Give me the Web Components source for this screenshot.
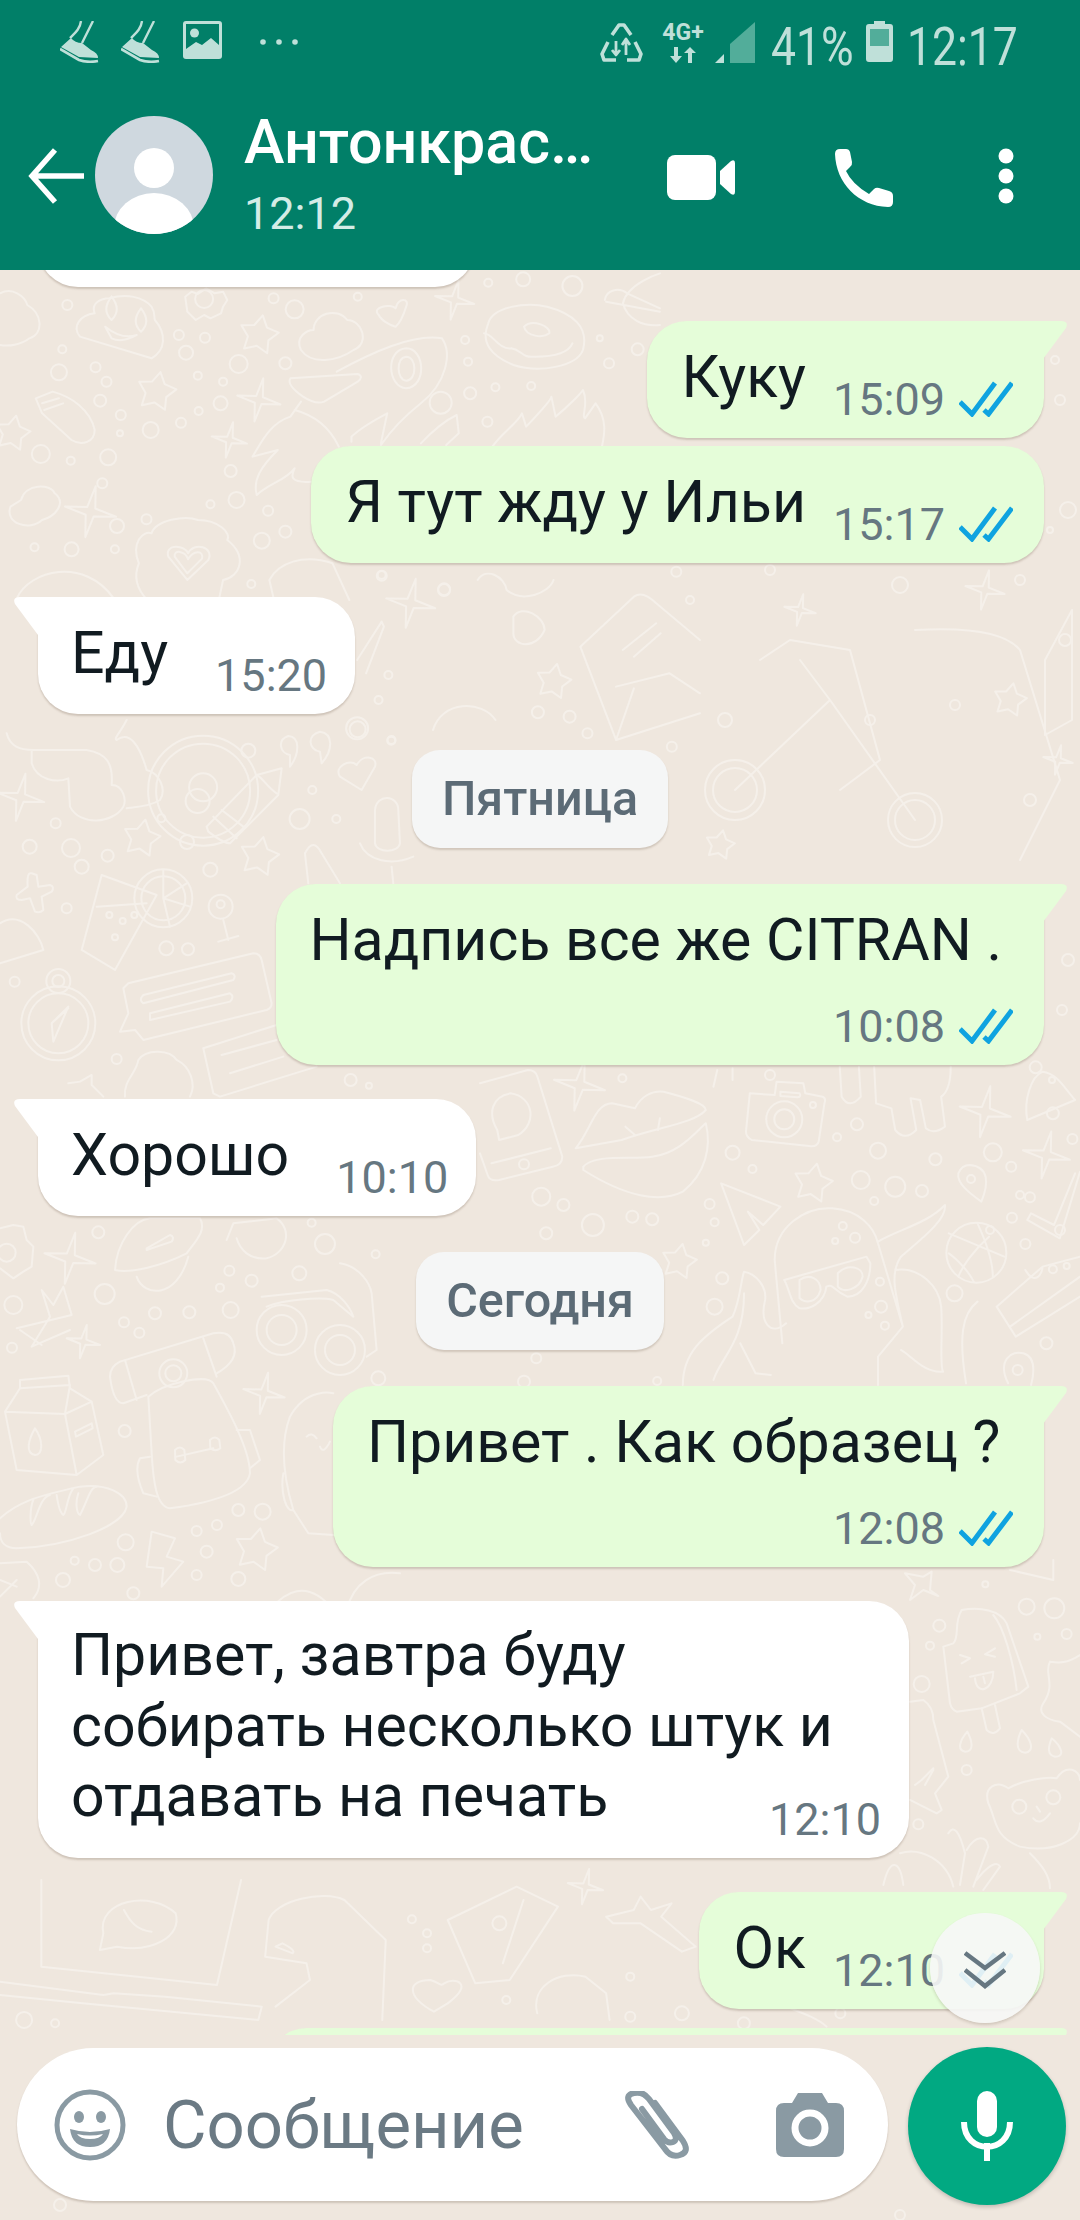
<!DOCTYPE html>
<html lang="ru">
<head>
<meta charset="utf-8">
<title>WhatsApp</title>
<style>
  html, body { margin: 0; padding: 0; background: #efe7de; }
  body { font-family: Roboto, "Noto Sans", sans-serif; }
</style>
</head>
<body>
<wa-app>
  <wa-header slot="header" name="Антонкрас…" seen="12:12"></wa-header>

  <wa-bubble side="in" style="margin-top:-100px;width:437px"></wa-bubble>
  <wa-bubble side="out" tail time="15:09" read>Куку</wa-bubble>
  <wa-bubble side="out" tight time="15:17" read>Я тут жду у Ильи</wa-bubble>
  <wa-bubble side="in" tail time="15:20">Еду</wa-bubble>
  <wa-day>Пятница</wa-day>
  <wa-bubble side="out" tail stacked time="10:08" read>Надпись все же CITRAN .</wa-bubble>
  <wa-bubble side="in" tail time="10:10">Хорошо</wa-bubble>
  <wa-day>Сегодня</wa-day>
  <wa-bubble side="out" tail stacked time="12:08" read style="width:711px">Привет . Как образец ?</wa-bubble>
  <wa-bubble side="in" tail over time="12:10" style="width:871px">Привет, завтра буду<br>собирать несколько штук и<br>отдавать на печать</wa-bubble>
  <wa-bubble side="out" tail time="12:10" read>Ок</wa-bubble>
  <wa-bubble side="out" tail style="margin-top:-15px;width:777px"></wa-bubble>

  <wa-composer slot="composer" placeholder="Сообщение"></wa-composer>
</wa-app>

<script>
// wallpaper: doodles traced per crop of the reference, x/y scaled back to the page
const doodles = [
  { t: [0, 270, 0.4209, 0.3333],
    rings: "160,105,5 700,118,9 650,85,5 425,195,5 487,203,5 442,248,7 148,238,4 140,307,8 227,292,5 253,335,5 238,392,6 287,435,5 285,490,3 358,480,8 430,458,5 470,317,4 530,335,4 524,400,7 472,423,4 567,282,9 678,280,6 1105,210,4 1112,275,4 1047,398,11 1117,370,6 1177,352,4 1262,348,4 1158,455,5 1425,205,3 1515,238,6 1447,280,5 1160,38,4 1243,28,7 1360,48,10 850,80,4 97,552,9 168,572,4 257,562,8 548,603,6 562,690,8 500,703,4 637,722,5 243,640,5 348,748,5 278,768,7 170,838,7 82,832,4 273,838,4 622,812,8 678,785,6 597,942,4 907,917,5 1055,960,6 485,87,9",
    stars: "615,195,20 372,365,20 30,490,18",
    sparks: "1080,90,20 615,390,22 545,510,18 215,725,26",
    paths: [
      "M190 200C170 170 190 135 225 130C215 100 240 85 260 85C300 70 340 80 360 110C370 130 365 140 368 150C395 190 395 240 360 265Z",
      "M265 80q-25 40 0 70q25-30 0-70M335 115q-25 40 0 70q25-30 0-70M250 170Q290 210 325 195Q290 220 265 205Z",
      "M715 240C700 200 730 180 745 180C745 130 800 110 825 150C860 150 880 220 840 240C800 275 740 285 715 240Z",
      "M900 135C880 110 930 100 940 115C945 80 975 85 965 110C960 130 950 160 940 170C925 165 905 150 900 135Z",
      "M800 305C880 250 980 190 1050 205C1075 250 1060 340 1000 400C960 440 930 480 905 525M835 515V500C860 470 890 450 920 430L905 520",
      "M690 325L850 312Q865 320 850 335L770 395Q750 405 720 380Q680 345 690 325Z",
      "M965 235C1010 235 1015 350 965 355C920 350 915 240 965 235ZM965 260C990 260 992 330 965 332C942 330 940 262 965 260Z",
      "M715 395L690 440C640 460 620 520 600 560L660 540C620 590 600 630 610 675C640 640 680 630 700 595C690 620 690 640 740 635M700 420C760 440 790 490 805 530",
      "M1170 530C1190 490 1230 460 1240 430L1250 470C1280 430 1310 390 1310 380L1320 440C1350 410 1380 370 1385 360C1400 400 1380 440 1390 445L1415 400C1445 450 1435 500 1430 530",
      "M85 385L125 365C170 380 215 420 225 480C225 515 195 530 170 510L100 430ZM100 400L140 385M105 420L150 400",
      "M1000 520C1030 480 1060 450 1085 435L1090 490L1060 525",
      "M330 880C310 820 340 780 360 790C370 750 440 735 470 750C520 750 550 790 540 810C590 860 570 920 530 930L520 990H350C320 950 320 910 330 880Z",
      "M400 860C390 820 440 825 447 850C460 815 510 830 495 870L445 930ZM415 860C412 838 440 842 447 868C460 838 485 842 480 866L445 910Z",
      "M0 70C30 50 60 80 65 105C100 130 105 190 70 205C50 225 20 230 0 225",
      "M50 690C60 640 120 640 130 670C160 700 130 740 100 750C70 785 10 760 25 710Z",
      "M440 80L455 65L470 72L490 55L510 70L530 65L540 90L530 110L525 130L500 145L485 135L465 150L445 125Z",
      "M1160 160C1170 110 1250 95 1300 110C1360 130 1400 170 1385 240C1370 290 1280 310 1220 285C1170 260 1140 220 1160 160Z",
      "M1150 190C1170 190 1185 240 1215 235C1240 240 1240 265 1270 260C1310 260 1350 250 1360 220M1245 170C1265 145 1310 170 1305 190C1290 205 1250 200 1245 170Z",
      "M1480 100C1490 40 1568 10 1568 10M1480 100C1490 150 1530 170 1568 165M1437 90C1440 60 1470 50 1490 70L1568 115M1440 95L1568 125",
      "M650 985L640 930C660 880 720 850 790 880L830 990M40 985C70 900 200 860 270 985"
    ] },
  { t: [0, 720, 0.3333, 0.3333],
    rings: "167,310,5 484,295,4 593,243,12 899,297,10 1009,297,4 937,210,4 745,92,7 1174,62,4 1073,28,8 89,380,7 213,384,9 323,407,6 245,440,7 561,366,7 631,449,7 200,565,5 499,685,7 564,688,6 44,785,5 350,1017,5 1052,1080,6 1107,1097,3 490,535,29 490,535,22 328,585,3 368,603,3 403,585,3 345,652,3 662,560,12 662,553,4 175,910,37 175,910,30 175,783,12 175,783,6",
    stars: "425,355,19 778,410,20",
    sparks: "62,232,24",
    paths: [
      "M20 40C30 80 60 90 100 90L260 90C320 100 340 130 335 195C370 195 380 240 370 260C340 310 240 320 210 260L205 175C170 190 110 180 95 130V90",
      "M380 0C360 40 340 55 350 60C390 30 420 80 440 150C480 160 500 210 480 240C450 260 400 262 380 265",
      "M95 460q-15-5-12 40L50 525q-5 15 15 15L90 535L105 575q15 5 25-5L125 530L155 515q10-15-5-20L115 500L110 465Z",
      "M870 140C900 100 900 50 865 48C830 60 840 100 870 105ZM965 130C1000 90 1000 40 960 35C920 45 925 90 960 95Z",
      "M1085 210L1020 170C1000 140 1050 115 1070 135C1090 100 1135 110 1125 140Z",
      "M620 320L770 165L845 145L835 225L690 370Q670 370 625 335ZM640 290L710 355M665 270L730 320M770 165C790 175 800 200 830 220",
      "M1125 270C1130 220 1195 225 1195 270L1200 370C1195 400 1130 400 1125 370ZM1080 370C1100 420 1170 440 1240 410M1175 440L1180 490",
      "M915 400Q940 350 965 400L1020 490M925 490L915 400",
      "M305 465L470 525L345 750L245 690ZM290 560L440 550M490 535L490 450M490 535L560 490M490 535L570 560M490 535L510 620",
      "M670 600L685 660M655 665L715 648M0 610C60 570 120 640 130 690L0 730",
      "M205 860L160 965L155 910ZM160 905L205 865",
      "M385 790L760 700Q780 700 785 720L815 850Q815 865 800 870L430 960L405 930L360 935L385 880L370 805Z",
      "M430 825L695 760Q710 765 700 780L430 850Q415 840 430 825ZM450 880L690 820Q705 830 690 845L450 900Z",
      "M610 985L830 915M610 985L640 1120L660 1130L950 1040M665 1005L830 960M690 1060L850 1010",
      "M375 1130C370 1080 410 1060 415 1020C440 985 510 990 530 1020C570 1040 590 1090 570 1130M205 1090L240 1085L275 1065L275 1095L310 1130"
    ] },
  { t: [0, 560, 0.4464, 0.3333],
    rings: "455,692,55 455,692,47 455,682,14 1205,457,6 1276,470,6 1316,520,5 1515,35,5 870,345,4 848,420,4 800,505,11 877,540,4 995,88,6 855,45,4 1505,560,5",
    stars: "1240,365,18",
    sparks: "920,130,25",
    paths: [
      "M970 510C990 420 1080 420 1110 480",
      "M1380 540L1300 260L1420 110Q1440 90 1470 130L1568 240M1380 380L1500 340L1568 400M1380 540L1420 385M1380 540L1568 460M1395 270L1470 190M1420 290L1480 220",
      "M800 300L855 185L860 200L820 340",
      "M1070 60C1090 20 1130 50 1135 90C1170 130 1230 100 1240 60M1150 170C1170 130 1220 170 1220 210C1200 270 1150 260 1150 220Z"
    ] },
  { t: [480, 1060, 0.3827, 0.3333],
    rings: "115,313,5 795,178,18 795,178,10 870,135,3 372,55,4 660,278,7 712,327,4 160,410,9 218,435,6 295,495,11 398,470,6 450,478,6 173,520,6 600,432,5 613,487,4 590,548,3 633,655,6 613,740,8 933,232,4 985,193,6 1040,272,8 1190,298,6 1340,277,9 1388,320,5 1548,237,5 995,360,9 1085,380,10 1155,393,6 1030,423,4 1437,412,5 1390,473,5 1425,552,5 1240,700,8 1480,850,6 1045,665,4 1048,740,6 1015,765,3 1058,797,4 948,498,4 980,533,5 928,543,3 147,895,5 115,965,6 463,963,4 1283,357,4 1297,578,30 1497,628,4 1533,618,3 1452,22,6 1497,160,6 1405,930,5",
    stars: "870,370,20 520,605,18",
    sparks: "260,75,26 1320,155,26 1480,285,24",
    paths: [
      "M0 70L125 30Q145 30 150 50L215 290Q215 315 190 320L50 360Q25 365 20 345L0 280M30 310L185 265M80 100C140 110 150 190 100 225L50 240L45 210C20 160 30 110 80 100Z",
      "M250 265C290 210 300 130 345 130L405 145C420 110 450 90 480 95C530 110 590 130 590 150C560 190 470 200 370 240Z",
      "M270 320C300 280 400 300 450 290C520 280 560 220 590 190C605 260 590 340 530 395C470 430 380 410 270 330ZM380 200L405 225M470 175L465 210",
      "M705 100L770 105L775 65L845 70L850 100L895 110Q905 115 900 130L885 245Q880 262 860 258L710 240Q695 230 695 215ZM785 95L835 100Q840 110 830 112L785 108Z",
      "M620 30L610 80M660 25V60",
      "M630 370L785 440L740 495L700 455L730 510L690 555Z",
      "M1280 315C1330 320 1330 370 1310 425C1280 400 1245 370 1250 340C1255 325 1265 315 1280 315Z",
      "M1430 480L1515 535L1568 335M1430 480L1440 460L1500 495L1555 340",
      "M1225 520L1370 590M1300 490C1320 540 1340 600 1340 650M1330 530C1290 570 1260 620 1250 650M1225 580C1250 600 1280 640 1290 665",
      "M790 850L770 600C770 500 850 440 920 445C990 450 1030 500 1040 550L1105 800L1040 890V975M1040 545C1090 510 1170 490 1215 435C1220 480 1150 540 1100 590C1070 640 1085 700 1105 800M1085 630C1150 620 1200 680 1205 740C1210 810 1200 920 1210 935C1160 940 1130 890 1100 870",
      "M795 660L1010 590L1020 610C1020 660 1000 710 960 710C920 690 925 670 905 680C900 730 860 750 835 745C810 730 810 690 795 660ZM835 660C860 640 890 655 890 690C880 730 850 730 835 715ZM935 640C960 610 1000 620 1000 650C990 690 950 700 935 680Z",
      "M530 975C530 880 580 830 660 770C680 720 680 670 690 635C720 640 750 680 745 720C730 790 760 830 800 790M610 960C630 890 690 850 690 700M680 850L720 940L760 945",
      "M1350 740L1470 620L1568 590M1350 740L1400 830L1568 710M1385 800L1568 650M1425 630C1450 680 1470 640 1470 620",
      "M1430 180C1420 120 1440 50 1470 35C1510 40 1530 90 1555 120Z",
      "M940 20L945 110Q965 150 995 110L990 20M1030 20L1035 130L1075 145L1085 210Q1110 245 1140 210L1125 115L1150 120L1165 205Q1185 225 1215 200L1205 110Q1230 90 1230 20",
      "M1300 725C1260 760 1250 830 1270 970M1380 970C1350 900 1390 870 1420 880C1450 890 1450 930 1440 975"
    ] },
  { t: [0, 1210, 0.3333, 0.3333],
    rings: "20,128,9 295,67,6 314,252,10 40,285,9 465,310,6 568,307,6 692,300,8 372,337,5 418,368,5 36,413,5 688,182,5 755,212,6 660,233,4 898,190,7 975,102,10 1127,133,4 935,38,4 1135,505,7 374,663,6 715,900,6 788,905,8 590,963,5 651,945,5 620,1025,6 377,997,8 224,1052,4 285,1065,6 352,1065,7 189,1110,7 590,1095,5 715,1107,7 400,1150,6 845,360,25 845,360,15 1020,420,25 1020,420,15 520,490,14 520,490,8",
    stars: "768,1020,22",
    sparks: "210,145,26 250,395,17 792,550,21",
    paths: [
      "M0 55L40 45L70 50L80 90L100 110L95 170L70 185L40 205L0 175",
      "M345 180C350 100 400 30 450 25L600 25C620 60 590 90 560 130C480 170 390 190 345 180ZM440 115L510 75Q525 80 515 95L440 120ZM410 200C430 260 530 270 565 140M680 90L700 40L830 25C880 60 860 130 800 145C750 150 720 120 710 85",
      "M50 355L215 315L190 230L160 285L125 240L150 320L95 410L210 360M60 360L125 405",
      "M785 260L980 240C1020 250 1050 290 1060 320M1020 160C1080 170 1110 220 1115 250L1130 420L1100 440M800 290C850 270 960 260 1000 270L1060 320",
      "M445 560C490 520 620 490 640 520C690 610 750 720 750 790C740 850 620 880 510 895C470 890 460 820 455 730Z",
      "M330 500Q330 470 360 455L640 370Q690 360 700 400Q720 450 650 490M440 555L370 580Q340 580 330 500M375 450L410 570M610 385L650 500",
      "M530 740L640 715M525 720q15-15 28 0l3 30q-15 15-30 0ZM630 690q15-15 28 0l3 25q-15 12-30 0ZM450 740L420 745Q400 780 430 850L470 860M710 660H750L780 750L750 775",
      "M60 510L205 497L210 535L275 575L310 735L230 795L50 780L15 605L60 535ZM60 535L210 525M15 605L195 612L275 575M195 612L230 795M195 612L210 525",
      "M105 655C130 690 130 735 105 735C75 730 85 690 105 655ZM225 665L275 640L278 655L228 680Z",
      "M0 925C50 880 100 860 240 830C320 820 380 850 380 890C370 950 200 1010 50 1015C20 1015 0 1000 0 970M100 870C90 890 90 940 95 945C110 930 120 860 150 855M170 855C175 890 180 910 190 915C200 910 200 860 220 835M235 850C225 880 230 910 240 915C260 880 270 830 290 830",
      "M455 965L525 985L500 1040L550 1055L485 1130L490 1075L440 1070Z",
      "M880 900C850 800 840 700 870 620C920 530 1000 550 1000 550M920 680q15-15 30 5M960 710q10 25 30-15M850 790C840 850 860 910 880 900L925 970L1000 975",
      "M0 1060L80 1055C120 1090 130 1130 100 1165M0 1110L50 1130M0 1160L50 1110M810 1200C850 1150 920 1100 1000 1200M1040 1200C1060 1120 1120 1080 1200 1090"
    ] },
  { t: [880, 1560, 0.3333, 0.3333],
    rings: "178,197,6 150,257,4 440,140,8 523,145,10 472,230,3 560,222,5 125,372,8 260,630,5 115,793,5 316,73,3 418,740,7 520,712,7",
    paths: [
      "M190 260L220 250C240 230 220 190 245 150C300 140 360 150 380 190L445 380L420 400L305 445L230 455Q215 450 210 430ZM340 165C370 200 400 300 410 390M305 445L320 510Q340 530 360 505L345 435",
      "M240 285L270 295L245 310M345 265L315 283L345 290M270 350L340 335C340 390 290 410 285 355M310 350L315 370",
      "M75 40L130 50L155 35L150 90L175 108L130 90L90 120L105 75Z",
      "M262 515C280 550 280 575 255 575C230 570 240 540 262 515ZM425 510C455 540 465 575 435 578C405 575 410 540 425 510ZM515 535C540 555 560 590 525 590C500 585 505 560 515 535Z",
      "M510 305C540 310 560 310 600 285M510 305C490 340 530 370 490 430C470 460 500 480 540 485L600 530",
      "M385 685C350 660 310 680 325 730C350 780 340 830 420 860C520 880 600 840 600 790M385 685C430 660 500 650 530 655C560 610 600 630 600 660M460 775Q480 800 510 760M480 755L470 740M520 770",
      "M60 880C120 860 200 900 220 980M205 820Q230 780 255 880L240 975M260 870C290 820 320 830 325 860L280 980M290 960C320 920 350 900 360 920L310 990M10 975C30 890 60 900 70 975M450 880C490 920 510 950 510 985",
      "M90 425L130 420Q160 440 160 480L205 650L165 700L185 750L170 760L90 720M105 675L125 660L160 625M135 675L160 630M390 30L520 60V0"
    ] },
  { t: [0, 1880, 0.6888, 0.3333],
    rings: "725,130,7 598,118,4 620,160,4 620,205,4 35,420,8 80,430,4 915,290,4 990,400,7 915,410,5 735,360,4 1080,430,6 1220,400,5",
    sparks: "850,20,18",
    paths: [
      "M60 0V260L315 315L350 0M0 305L150 345L165 340L240 350L380 380L375 420L120 370L0 345",
      "M145 210L150 160C140 60 220 30 255 100C265 170 220 220 170 200ZM180 90C190 130 200 150 220 155",
      "M390 120C400 60 470 30 500 60L560 180L555 420M390 120L385 230L445 250L450 300L400 380M410 190Q430 210 425 220L400 200Z",
      "M630 395C590 350 590 300 625 300C640 310 640 320 645 310C660 290 690 310 650 370Z",
      "M880 110L920 90L930 50L945 90L975 70L960 110L1010 200L990 215L930 130L890 130Z",
      "M650 120L750 20L810 80L740 300L690 310ZM760 60L730 250",
      "M780 400C770 320 810 270 850 290L880 340L885 420M1100 340C1130 380 1180 400 1200 440"
    ] },
  { t: [0, 0, 1, 1],
    rings: "1055,360,4 1060,400,5 1068,510,8 1050,530,3 1062,1010,5 1068,960,6 1052,1080,3 725,720,7 870,720,5 955,705,5 1030,800,6 690,600,4 770,570,5 900,585,8 1020,580,5 735,790,30 735,790,22 915,820,27 915,820,20 1065,640,6 770,1075,5 1020,1195,4 1060,1230,5 990,1230,4 60,2205,6 900,2215,5",
    stars: "1010,700,17 720,845,15",
    sparks: "985,590,20 800,610,16 1058,760,15",
    paths: [
      "M760 660L790 640L850 650L880 760L840 790M735 790L830 700L915 820M830 700L800 660",
      "M915 630Q1000 625 1020 650L1060 780L1020 860",
      "M1045 660L1072 610V720L1045 735Z"
    ] }
];

function ringMark(cx, cy, r) {
  return `<circle cx="${cx}" cy="${cy}" r="${r}"/>`;
}

function pointedMark(cx, cy, r, tips, inner) {
  let pts = [];
  for (let i = 0; i < tips * 2; i++) {
    const a = -Math.PI / 2 + 0.2 + i * Math.PI / tips;
    const rad = i % 2 === 0 ? r : r * inner;
    pts.push((cx + rad * Math.cos(a)).toFixed(1) + "," + (cy + rad * Math.sin(a)).toFixed(1));
  }
  return `<polygon points="${pts.join(" ")}"/>`;
}

class WaWallpaper extends HTMLElement {
  constructor() {
    super();
    this.attachShadow({mode: "open"});
  }

  connectedCallback() {
    let body = "";
    for (const zone of doodles) {
      const [ox, oy, sx, sy] = zone.t;
      const each = (list, fn) => {
        if (!list) return;
        for (const item of list.split(" ")) {
          const [x, y, r] = item.split(",").map(Number);
          body += fn(ox + x * sx, oy + y * sy, r);
        }
      };
      each(zone.rings, ringMark);
      each(zone.stars, (x, y, r) => pointedMark(x, y, r, 5, 0.55));
      each(zone.sparks, (x, y, r) => pointedMark(x, y, r, 4, 0.22));
      body += `<g transform="translate(${ox} ${oy}) scale(${sx} ${sy})">`;
      for (const d of zone.paths) {
        body += `<path d="${d}" vector-effect="non-scaling-stroke"/>`;
      }
      body += "</g>";
    }
    this.shadowRoot.innerHTML = `
    <style>
      :host { display: block; position: absolute; inset: 0; }
      svg { display: block; width: 1080px; height: 2220px; }
      svg * { fill: none; stroke: #f5f0ea; stroke-width: 2; stroke-linejoin: round; stroke-linecap: round; }
    </style>
    <svg viewBox="0 0 1080 2220">${body}</svg>`;
  }
}

class WaApp extends HTMLElement {
  constructor() {
    super();
    this.attachShadow({mode: "open"});
    this.shadowRoot.innerHTML = `
    <style>
      :host {
        display: flex;
        flex-direction: column;
        position: relative;
        width: 1080px;
        height: 2220px;
        overflow: hidden;
        background: #efe7de;
      }
      .chat {
        position: relative;
        flex: none;
        height: 1765px;
        overflow: hidden;
        display: flex;
        flex-direction: column;
        gap: 34px;
      }
      .composer { position: relative; flex: 1; }
      wa-scroll-down { position: absolute; left: 930px; top: 1913px; }
    </style>
    <wa-wallpaper></wa-wallpaper>
    <slot name="header"></slot>
    <div class="chat"><slot></slot></div>
    <div class="composer"><slot name="composer"></slot></div>
    <wa-scroll-down></wa-scroll-down>`;
  }
}

class WaHeader extends HTMLElement {
  constructor() {
    super();
    this.attachShadow({mode: "open"});
    this.name = this.getAttribute("name");
    this.seen = this.getAttribute("seen");
  }

  shoe() {
    return `<svg width="40" height="42" viewBox="0 0 40 42">
      <path d="M21 0C20 8 15 12 10 17M33 0L22 22" fill="none" stroke="#bfe0d9" stroke-width="2.400"/>
      <path d="M1 26L11 17Q15 22 22 22L31 29Q38 32 38 37L19 36Z" fill="#bfe0d9"/>
      <path d="M0 28L19 39Q28 42 38 40" fill="none" stroke="#bfe0d9" stroke-width="2.600"/>
    </svg>`;
  }

  connectedCallback() {
    this.shadowRoot.innerHTML = `
    <style>
      :host {
        display: block;
        position: relative;
        height: 270px;
        background: #017f68;
        color: #fff;
        font-family: Roboto, sans-serif;
      }
      .status {
        height: 76px;
        display: flex;
        align-items: flex-start;
        padding: 21px 0 0 60px;
        box-sizing: border-box;
        color: #bfe0d9;
      }
      .status svg { display: block; flex: none; }
      .shoes { display: flex; gap: 21px; }
      .pic { margin-left: 22px; }
      .more { margin-left: 38px; margin-top: 18px; }
      .right { margin-left: 302px; display: flex; align-items: flex-start; }
      .net { width: 42px; margin-left: 19px; margin-top: 2px; display: flex; flex-direction: column; align-items: center; }
      .net b { font: 700 23px/19px Roboto, sans-serif; letter-spacing: 0; }
      .stat-text { font-size: 53px; line-height: 46px; display: block; transform: scaleX(0.84); transform-origin: left top; white-space: nowrap; }
      .toolbar {
        height: 194px;
        display: flex;
        align-items: flex-start;
      }
      .back { margin: 72px 0 0 28px; }
      .avatar { margin: 40px 0 0 11px; }
      .who { margin-left: 31px; width: 380px; padding-top: 31px; }
      .name { font-size: 61px; font-weight: 500; line-height: 70px; white-space: nowrap; }
      .seen { font-size: 45px; line-height: 50px; color: #d4ece6; margin-top: 12px; }
      .video { margin: 79px 0 0 43px; }
      .call { margin: 72px 0 0 98px; }
      .dots { margin: 72px 0 0 104px; }
    </style>
    <div class="status">
      <div class="shoes">${this.shoe()}${this.shoe()}</div>
      <svg class="pic" width="39" height="38" viewBox="0 0 39 38">
        <rect width="39" height="38" rx="3" fill="#bfe0d9"/>
        <rect x="3" y="3" width="33" height="32" fill="#017f68"/>
        <circle cx="11.500" cy="12" r="4.500" fill="#bfe0d9"/>
        <path d="M3 28L13 21L19 24L28 17L36 24V35H3Z" fill="#bfe0d9"/>
      </svg>
      <svg class="more" width="38" height="6" viewBox="0 0 38 6" fill="#bfe0d9">
        <circle cx="3" cy="3" r="2.800"/><circle cx="19" cy="3" r="2.800"/><circle cx="35" cy="3" r="2.800"/>
      </svg>
      <div class="right">
        <svg width="43" height="40" viewBox="0 0 43 40" style="margin-top:2px" fill="none" stroke="#bfe0d9" stroke-width="3.600" stroke-linejoin="round">
          <path d="M12 12L19 2H24L31 12M8 19L2 31L4 37H16M27 37H39L41 31L35 19"/>
          <path d="M16 18V31M12 27L16 32L20 27M26 32V17M22 22L26 16L30 22" stroke-width="2.800"/>
        </svg>
        <div class="net">
          <b>4G+</b>
          <svg width="26" height="16" viewBox="0 0 26 16" fill="#bfe0d9" style="margin-top:5px">
            <path d="M4 0H8V9H12L6 16L0 9H4ZM18 16H22V6H26L20 0L14 6H18Z"/>
          </svg>
        </div>
        <svg width="40" height="41" viewBox="0 0 40 41" style="margin:1px 0 0 11px">
          <path d="M15 41V22L40 0V41Z" fill="#52ad9a"/>
          <path d="M0 41L9 32V41Z" fill="#bfe0d9"/>
        </svg>
        <span style="width:79px;margin:3px 0 0 16px"><span class="stat-text">41%</span></span>
        <svg width="27" height="41" viewBox="0 0 27 41" style="margin-left:16px">
          <path d="M8 0H19V3H24Q27 3 27 6V38Q27 41 24 41H3Q0 41 0 38V6Q0 3 3 3H8Z" fill="#bfe0d9"/>
          <rect x="4" y="8" width="19" height="17" fill="#52ad9a"/>
        </svg>
        <span style="width:108px;margin:3px 0 0 14px"><span class="stat-text">12:17</span></span>
      </div>
    </div>
    <div class="toolbar">
      <svg class="back" width="56" height="56" viewBox="0 0 56 56" fill="none" stroke="#fff" stroke-width="5.500">
        <path d="M56 28H4M27 2L4 28L27 54"/>
      </svg>
      <svg class="avatar" width="118" height="118" viewBox="0 0 118 118">
        <clipPath id="round"><circle cx="59" cy="59" r="59"/></clipPath>
        <circle cx="59" cy="59" r="59" fill="#cfd8df"/>
        <g clip-path="url(#round)">
          <ellipse cx="59" cy="52" rx="20" ry="20" fill="#fff"/>
          <ellipse cx="59" cy="112" rx="40" ry="35" fill="#fff"/>
        </g>
      </svg>
      <div class="who">
        <div class="name">${this.name}</div>
        <div class="seen">${this.seen}</div>
      </div>
      <svg class="video" width="68" height="45" viewBox="0 0 68 45" fill="#fff">
        <rect width="49" height="45" rx="8"/>
        <path d="M53 16L64 6Q68 4 68 8V37Q68 41 64 39L53 29Z"/>
      </svg>
      <svg class="call" width="60" height="60" viewBox="0 0 60 60" fill="#fff">
        <path d="M2 6Q2 1 7 1L13 1Q16 1 17 4L19 14Q19.500 17 17 19L13 23Q19 36 36 46L41 41Q43 39 46 40L56 43Q60 44 60 48V54Q60 59 55 59C25 58 3 35 2 6Z"/>
      </svg>
      <svg class="dots" width="18" height="56" viewBox="0 0 18 56" fill="#fff">
        <circle cx="9" cy="8" r="7.500"/><circle cx="9" cy="28" r="7.500"/><circle cx="9" cy="48" r="7.500"/>
      </svg>
    </div>`;
  }
}

class WaBubble extends HTMLElement {
  constructor() {
    super();
    this.attachShadow({mode: "open"});
    this.time = this.getAttribute("time");
    this.read = this.hasAttribute("read");
  }

  style() {
    return `
    <style>
      :host { display: block; position: relative; flex: none; font-family: Roboto, sans-serif; }
      :host([side="out"]) { align-self: flex-end; margin-right: 36px; --bg: #e5fdd9; }
      :host([side="in"]) { align-self: flex-start; margin-left: 38px; --bg: #fff; }
      :host([tight]) { margin-top: -26px; }
      .b {
        display: flex;
        align-items: flex-end;
        min-height: 117px;
        box-sizing: border-box;
        padding: 20px 0 13px 34px;
        background: var(--bg);
        border-radius: 40px;
        box-shadow: 0 2px 2px rgba(90, 70, 50, .22);
        color: #111b21;
      }
      :host([side="in"]) .b { padding-left: 33px; }
      :host([tail][side="out"]) .b { border-top-right-radius: 0; }
      :host([tail][side="in"]) .b { border-top-left-radius: 0; }
      .text { font-size: 59px; line-height: 71px; white-space: nowrap; padding-bottom: 13px; }
      .meta { display: flex; align-items: flex-start; flex: none; margin-left: 27px; padding-right: 31px; height: 50px; }
      :host([side="in"]) .meta { margin-left: 47px; padding-right: 28px; }
      .time { font-size: 45px; line-height: 50px; color: #667781; white-space: nowrap; }
      .meta svg { margin: 6px 0 0 14px; }
      :host([stacked]) .b { flex-direction: column; align-items: stretch; }
      :host([stacked]) .text { padding: 0 42px 0 0; margin-bottom: 27px; }
      :host([stacked]) .meta { justify-content: flex-end; }
      :host([over]) .b { display: grid; padding-top: 19px; }
      :host([over]) .text { line-height: 70.500px; }
      :host([over]) .text, :host([over]) .meta { grid-area: 1 / 1; }
      :host([over]) .meta { justify-self: end; align-self: end; }
      .tail { position: absolute; top: 0; display: block; }
      :host([side="out"]) .tail { right: -24px; }
      :host([side="in"]) .tail { left: -25px; transform: scaleX(-1); }
    </style>`;
  }

  connectedCallback() {
    const check = `<svg width="54" height="36" viewBox="0 0 54 36" fill="none" stroke="#0fa3e0" stroke-width="5">
      <path d="M1 21L13 33L36 2M25 29L29.500 33L53 2"/></svg>`;
    const meta = this.time
      ? `<div class="meta"><span class="time">${this.time}</span>${this.read ? check : ""}</div>`
      : "";
    this.shadowRoot.innerHTML = `${this.style()}
    <div class="b"><div class="text"><slot></slot></div>${meta}</div>
    ${this.hasAttribute("tail") ? `<svg class="tail" width="25" height="38" viewBox="0 0 25 38">
      <path d="M0 0H18Q26 0 23 7L0 38Z" style="fill:var(--bg)"/></svg>` : ""}`;
  }
}

class WaDay extends HTMLElement {
  constructor() {
    super();
    this.attachShadow({mode: "open"});
    this.shadowRoot.innerHTML = `
    <style>
      :host {
        display: block;
        flex: none;
        align-self: center;
        margin: 2px 0;
        padding: 0 30px;
        height: 98px;
        background: #f5f6f6;
        border-radius: 28px;
        box-shadow: 0 2px 2px rgba(90, 70, 50, .2);
        color: #5c6b76;
        font: 500 48.500px/98px Roboto, sans-serif;
      }
    </style>
    <slot></slot>`;
  }
}

class WaScrollDown extends HTMLElement {
  constructor() {
    super();
    this.attachShadow({mode: "open"});
    this.shadowRoot.innerHTML = `
    <style>
      :host {
        display: flex;
        align-items: center;
        justify-content: center;
        width: 110px;
        height: 110px;
        border-radius: 50%;
        background: rgba(246, 247, 246, .9);
        box-shadow: 0 2px 3px rgba(90, 70, 50, .2);
      }
      svg { margin-top: 4px; }
    </style>
    <svg width="42" height="38" viewBox="0 0 42 38" fill="none" stroke="#667781" stroke-width="4.500">
      <path d="M1 2L21 17L41 2M1 19L21 35L41 19"/>
    </svg>`;
  }
}

class WaComposer extends HTMLElement {
  constructor() {
    super();
    this.attachShadow({mode: "open"});
    this.placeholder = this.getAttribute("placeholder");
  }

  connectedCallback() {
    this.shadowRoot.innerHTML = `
    <style>
      :host {
        display: flex;
        gap: 20px;
        padding: 13px 14px 0 17px;
        font-family: Roboto, sans-serif;
      }
      .field {
        flex: 1;
        height: 153px;
        display: flex;
        align-items: center;
        background: #fff;
        border-radius: 77px;
        box-shadow: 0 2px 2px rgba(90, 70, 50, .22);
        padding-left: 37px;
      }
      .hint { font-size: 67px; color: #6b7a84; margin-left: 37px; width: 460px; white-space: nowrap; }
      .mic {
        flex: none;
        width: 158px;
        height: 158px;
        margin-top: -1px;
        border-radius: 50%;
        background: #01a982;
        box-shadow: 0 2px 4px rgba(0, 0, 0, .2);
        display: flex;
        align-items: center;
        justify-content: center;
      }
      svg { display: block; flex: none; }
    </style>
    <div class="field">
      <svg width="72" height="72" viewBox="0 0 72 72">
        <circle cx="36" cy="36" r="33" fill="none" stroke="#8a9aa3" stroke-width="5"/>
        <ellipse cx="25" cy="28" rx="5" ry="6" fill="#8a9aa3"/>
        <ellipse cx="47" cy="28" rx="5" ry="6" fill="#8a9aa3"/>
        <path d="M16 40Q36 46 56 40Q54 58 36 58Q18 58 16 40Z" fill="#8a9aa3"/>
        <path d="M23 45Q36 48 49 45Q46 50 36 50Q26 50 23 45Z" fill="#fff"/>
      </svg>
      <div class="hint">${this.placeholder}</div>
      <svg width="74" height="68" viewBox="0 0 74 68" fill="none" stroke="#8a9aa3" stroke-width="6" stroke-linecap="round">
        <path d="M32 12L60 50Q67 61 57 64Q48 67 42 58L8 14Q1 4 11 2Q20 0 26 8L51 42Q55 49 50 51Q45 53 41 48L19 18"/>
      </svg>
      <svg style="margin-left:79px" width="68" height="64" viewBox="0 0 68 64">
        <path d="M22 0H46L52 10H60Q68 10 68 18V56Q68 64 60 64H8Q0 64 0 56V18Q0 10 8 10H16Z" fill="#8a9aa3"/>
        <circle cx="34" cy="35" r="15" fill="#8a9aa3" stroke="#fff" stroke-width="7"/>
      </svg>
    </div>
    <div class="mic">
      <svg width="52" height="70" viewBox="0 0 52 70" fill="none" stroke="#fff" stroke-width="6">
        <rect x="16" y="0" width="20" height="46" rx="10" fill="#fff" stroke="none"/>
        <path d="M3 31C3 64 49 64 49 31M26 52V70"/>
      </svg>
    </div>`;
  }
}

customElements.define("wa-wallpaper", WaWallpaper);
customElements.define("wa-app", WaApp);
customElements.define("wa-header", WaHeader);
customElements.define("wa-bubble", WaBubble);
customElements.define("wa-day", WaDay);
customElements.define("wa-scroll-down", WaScrollDown);
customElements.define("wa-composer", WaComposer);
</script>
</body>
</html>
